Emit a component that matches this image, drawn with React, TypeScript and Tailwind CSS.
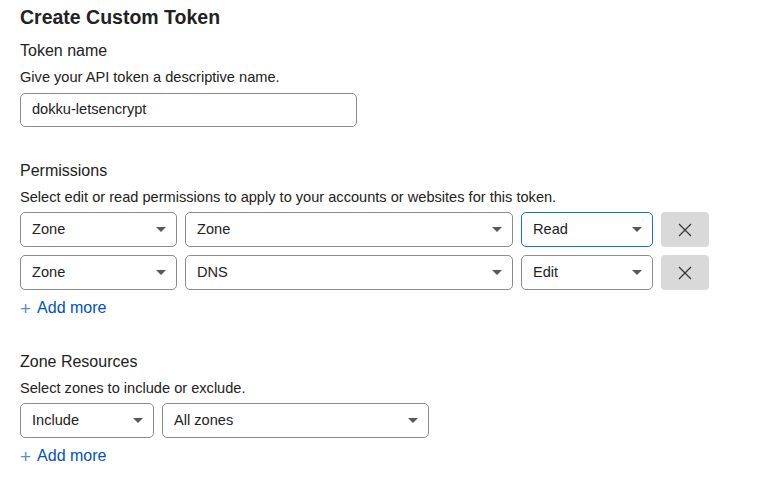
import type { ReactNode } from "react";

const font = { fontFamily: '"Liberation Sans", Arial, sans-serif' };

function Caret() {
  return (
    <svg className="w-[10px] h-[5px] shrink-0" viewBox="0 0 10 5">
      <path d="M0 0h10L5 5z" fill="#595959" />
    </svg>
  );
}

function Select({ value, className, focused }: { value: string; className: string; focused?: boolean }) {
  return (
    <div
      className={`h-[35px] flex items-center justify-between pl-[11px] pr-[10px] rounded-[5px] bg-white border text-[14.6px] text-[#222] ${
        focused ? "border-[#0a6cff]" : "border-[#8c8c8c]"
      } ${className}`}
    >
      <span>{value}</span>
      <Caret />
    </div>
  );
}

function RemoveButton() {
  return (
    <button type="button" className="w-[48px] h-[35px] rounded-[4px] bg-[#d9d9d9] flex items-center justify-center">
      <svg className="w-[14px] h-[14px]" viewBox="0 0 14 14" fill="none" stroke="#333" strokeWidth={1.2}>
        <path d="M1 1l12 12M13 1L1 13" />
      </svg>
    </button>
  );
}

function AddMore() {
  return (
    <div className="flex items-center gap-[6px] mt-[8px] h-[20px] text-[16px]">
      <span className="text-[#5a8fd8] text-[19px] font-light leading-none">+</span>
      <span className="text-[#0051c3]">Add more</span>
    </div>
  );
}

function Section({ title, desc, children, className = "" }: { title: string; desc: string; children: ReactNode; className?: string }) {
  return (
    <div className={className}>
      <h2 className="text-[16px] text-[#222] leading-[20px]">{title}</h2>
      <p className="text-[14.6px] text-[#222] leading-[18px] mt-[7px]">{desc}</p>
      {children}
    </div>
  );
}

export default function App() {
  return (
    <div className="min-h-screen bg-white px-[20px] pt-[5px]" style={font}>
      <h1 className="text-[19.5px] font-bold text-[#222] leading-[24px]">Create Custom Token</h1>

      <Section title="Token name" desc="Give your API token a descriptive name." className="mt-[12px]">
        <div className="mt-[7px] w-[337px] h-[34px] rounded-[5px] border border-[#8c8c8c] flex items-center px-[11px] text-[14.6px] text-[#222]">
          dokku-letsencrypt
        </div>
      </Section>

      <Section
        title="Permissions"
        desc="Select edit or read permissions to apply to your accounts or websites for this token."
        className="mt-[34px]"
      >
        <div className="mt-[6px] flex flex-col gap-[8px]">
          <div className="flex gap-[8px]">
            <Select value="Zone" className="w-[157px]" />
            <Select value="Zone" className="w-[328px]" />
            <Select value="Read" className="w-[132px]" focused />
            <RemoveButton />
          </div>
          <div className="flex gap-[8px]">
            <Select value="Zone" className="w-[157px]" />
            <Select value="DNS" className="w-[328px]" />
            <Select value="Edit" className="w-[132px]" />
            <RemoveButton />
          </div>
        </div>
        <AddMore />
      </Section>

      <Section title="Zone Resources" desc="Select zones to include or exclude." className="mt-[34px]">
        <div className="mt-[6px] flex gap-[8px]">
          <Select value="Include" className="w-[134px]" />
          <Select value="All zones" className="w-[267px]" />
        </div>
        <AddMore />
      </Section>
    </div>
  );
}
